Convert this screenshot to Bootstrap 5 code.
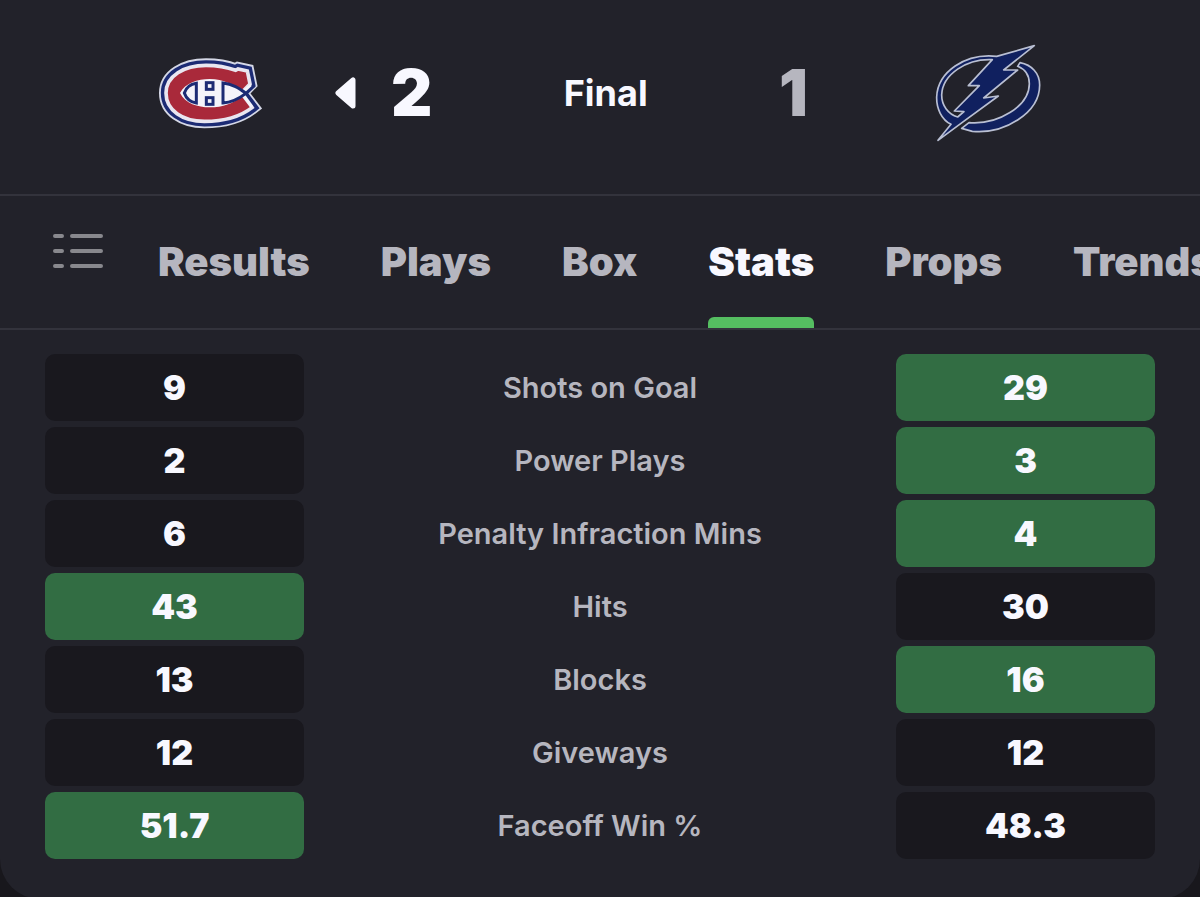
<!DOCTYPE html>
<html lang="en">
<head>
  <meta charset="UTF-8" />
  <meta name="viewport" content="width=device-width, initial-scale=1" />
  <title>Canadiens 2 - 1 Lightning | Stats</title>
  <link href="https://cdn.jsdelivr.net/npm/bootstrap@5.3.0/dist/css/bootstrap.min.css" rel="stylesheet" />
  <style>
    body { font-family: Inter, "Liberation Sans", sans-serif; background-color: #18171c; color: #f8f8ff; }
    .game-panel { background: #22222a; min-height: 100vh; border-radius: 0 0 40px 40px; }

    /* score header */
    .scoreboard { padding: 39px 158px 47px; border-bottom: 2px solid #33333c; }
    .scoreboard svg { display: block; }
    .team-score { font-size: 64px; font-weight: 900; line-height: 108px; }
    .team-score.losing { color: #b6b6bf; }
    .game-status { font-size: 36px; font-weight: 700; line-height: 108px; margin: 0; }
    .away-side { gap: 72px; }
    .away-side .score-wrap { gap: 34px; }
    .home-side { gap: 127px; }

    /* tabs */
    .game-tabs { border-bottom: 2px solid #33333c; padding-left: 52px; overflow: hidden; }
    .list-btn { background: none; border: 0; padding: 0 0 22px; margin-right: 54px; }
    .game-tabs .nav { gap: 71px; }
    .game-tabs .nav-link { position: relative; padding: 0; font-size: 40px; font-weight: 900; line-height: 132px; color: #b6b6bf; }
    .game-tabs .nav-link.active { color: #f8f8ff; }
    .game-tabs .nav-link.active::after { content: ""; position: absolute; left: 0; right: 0; bottom: 0; height: 11px; background: #55be61; border-radius: 6px 6px 0 0; }

    /* stats */
    .stats-wrap { padding: 18px 45px 34px; }
    .stats-table { width: 100%; table-layout: fixed; border-collapse: separate; border-spacing: 0 6px; text-align: center; }
    .stats-table td { height: 67px; padding: 0; background: #19181e; border-radius: 10px; font-size: 34px; font-weight: 900; line-height: 1; }
    .stats-table td.best { background: #326d43; }
    .stats-table tbody th { padding: 0; font-size: 29px; font-weight: 600; line-height: 1; color: #b6b6bf; }
    .col-value { width: 259px; }

    @media (max-width: 991px) {
      .scoreboard { padding-left: 24px; padding-right: 24px; }
      .away-side, .home-side { gap: 24px; }
      .col-value { width: 25%; }
    }
  </style>
</head>
<body>

  <main class="game-panel">
    <header class="scoreboard d-flex justify-content-between align-items-center">
      <div class="away-side d-flex align-items-center">
        <svg width="105" height="72" viewBox="26 38 315 216" role="img" aria-label="Montreal Canadiens">
          <defs>
            <path id="cShape" d="M50 146C50 94 105 63 170 63C205 63 235 69 259 78L266 74L294 80L302 119L276 146L309 189C272 218 220 231 165 231C100 231 50 198 50 146Z" />
          </defs>
          <use href="#cShape" fill="#fff" stroke="#d5d8e6" stroke-width="42" />
          <use href="#cShape" fill="#fff" stroke="#1c2b74" stroke-width="31" />
          <use href="#cShape" fill="#a9293a" stroke="#e9e6f0" stroke-width="11" />
          <path d="M92 146C108 116 145 104 181 104C224 104 252 122 277 140L304 118L308 128L292 147L314 184L304 190L279 154C250 178 222 189 181 189C145 189 108 178 92 146Z" fill="#f4f4fa" />
          <g fill="none" stroke="#1c2b74" stroke-width="9">
            <path d="M141 117V176C123 173 110 161 105 146C110 131 123 120 141 117Z" />
            <rect x="171" y="115" width="20" height="20" />
            <rect x="171" y="160" width="20" height="20" />
            <path d="M316 123L290 147C270 162 250 174 221 176V116C250 119 269 132 290 147L321 190" />
          </g>
        </svg>
        <div class="score-wrap d-flex align-items-center">
          <svg width="22" height="32" viewBox="0 0 22 32" aria-hidden="true">
            <path d="M18 3V29L3 16Z" fill="#f8f8ff" stroke="#f8f8ff" stroke-width="5" stroke-linejoin="round" />
          </svg>
          <span class="team-score">2</span>
        </div>
      </div>
      <h1 class="game-status">Final</h1>
      <div class="home-side d-flex align-items-center">
        <span class="team-score losing">1</span>
        <svg width="107" height="98" viewBox="30 31 321 294" role="img" aria-label="Tampa Bay Lightning">
          <g fill="#10205f" stroke="#b9bfd3" stroke-width="5" stroke-linejoin="round">
            <path d="M215 68C120 58 38 115 35 190C34 225 50 258 78 272L39 320L112 266L220 187L176 193L278 109L236 109L328 36Z" />
            <path d="M285 87C320 94 344 118 344 154C344 238 238 302 142 293L110 284L132 267C218 274 313 218 313 150C313 126 301 107 278 98Z" />
          </g>
          <path d="M202 78C125 74 52 122 50 184C50 216 70 242 98 250L117 234L88 232L163 156L130 156Z" fill="#22222a" stroke="#b9bfd3" stroke-width="5" stroke-linejoin="round" />
        </svg>
      </div>
    </header>

    <nav class="game-tabs d-flex align-items-center" aria-label="Game sections">
      <button type="button" class="list-btn flex-shrink-0" aria-label="All sections">
        <svg class="d-block" width="52" height="38" viewBox="0 0 52 38" fill="none" stroke="#88888d" stroke-width="4" stroke-linecap="round">
          <path d="M3 4H10M20 4H49M3 19H10M20 19H49M3 34H10M20 34H49" />
        </svg>
      </button>
      <ul class="nav flex-nowrap">
        <li class="nav-item"><a class="nav-link" href="#results">Results</a></li>
        <li class="nav-item"><a class="nav-link" href="#plays">Plays</a></li>
        <li class="nav-item"><a class="nav-link" href="#box">Box</a></li>
        <li class="nav-item"><a class="nav-link active" href="#stats" aria-current="page">Stats</a></li>
        <li class="nav-item"><a class="nav-link" href="#props">Props</a></li>
        <li class="nav-item"><a class="nav-link" href="#trends">Trends</a></li>
      </ul>
    </nav>

    <section class="stats-wrap" id="stats">
      <table class="stats-table">
        <colgroup>
          <col class="col-value" />
          <col />
          <col class="col-value" />
        </colgroup>
        <tbody>
          <tr><td>9</td><th scope="row">Shots on Goal</th><td class="best">29</td></tr>
          <tr><td>2</td><th scope="row">Power Plays</th><td class="best">3</td></tr>
          <tr><td>6</td><th scope="row">Penalty Infraction Mins</th><td class="best">4</td></tr>
          <tr><td class="best">43</td><th scope="row">Hits</th><td>30</td></tr>
          <tr><td>13</td><th scope="row">Blocks</th><td class="best">16</td></tr>
          <tr><td>12</td><th scope="row">Giveways</th><td>12</td></tr>
          <tr><td class="best">51.7</td><th scope="row">Faceoff Win %</th><td>48.3</td></tr>
        </tbody>
      </table>
    </section>
  </main>

  <script src="https://cdn.jsdelivr.net/npm/bootstrap@5.3.0/dist/js/bootstrap.bundle.min.js"></script>
</body>
</html>
